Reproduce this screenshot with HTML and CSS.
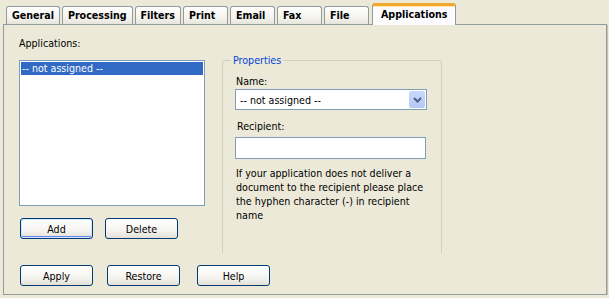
FILE: index.html
```html
<!DOCTYPE html>
<html lang="en">
<head>
    <meta charset="UTF-8">
    <title>Applications</title>
    <link rel="stylesheet" href="styles.css">
</head>
<body>
    <div class="window">
        <div class="tabs">
            <div class="tab">General</div>
            <div class="tab">Processing</div>
            <div class="tab">Filters</div>
            <div class="tab">Print</div>
            <div class="tab">Email</div>
            <div class="tab">Fax</div>
            <div class="tab">File</div>
            <div class="tab active">Applications</div>
        </div>

        <div class="panel">
            <div class="columns">
                <div class="left">
                    <div class="label">Applications:</div>
                    <div class="listbox">
                        <div class="item selected">-- not assigned --</div>
                    </div>
                    <div class="row-buttons">
                        <button class="btn default">Add</button>
                        <button class="btn">Delete</button>
                    </div>
                </div>

                <fieldset class="props">
                    <legend>Properties</legend>
                    <div class="label name-label">Name:</div>
                    <div class="select">
                        <span class="select-text">-- not assigned --</span>
                        <span class="select-arrow">
                            <svg width="9" height="6" viewBox="0 0 9 6">
                                <path d="M1 1 L4.5 4.5 L8 1" fill="none" stroke="#4D6185" stroke-width="2"/>
                            </svg>
                        </span>
                    </div>
                    <div class="label recipient-label">Recipient:</div>
                    <input type="text" class="textbox">
                    <p class="hint">If your application does not deliver a document to the recipient please place the hyphen character (-) in recipient name</p>
                </fieldset>
            </div>

            <div class="footer">
                <button class="btn">Apply</button>
                <button class="btn">Restore</button>
                <button class="btn help">Help</button>
            </div>
        </div>
    </div>
</body>
</html>
```

FILE: styles.css
```css
body {
    margin: 0;
    background-color: #ECE9D8;
    font-family: "DejaVu Sans Condensed", "DejaVu Sans", sans-serif;
    font-size: 10.6px;
    color: #000000;
}
.window {
    padding: 4px 0 0 3px;
    width: 604px;
}

/* tab strip */
.tabs {
    display: flex;
    align-items: flex-end;
    gap: 2px;
    padding-left: 3px;
    height: 20px;
    position: relative;
    z-index: 1;
}
.tab {
    box-sizing: border-box;
    height: 18px;
    min-width: 45px;
    padding: 0 5px;
    border: 1px solid #919B9C;
    border-bottom: none;
    border-radius: 3px 3px 0 0;
    background: linear-gradient(#FFFFFF, #F4F3EE 60%, #E6E5DD);
    font-weight: bold;
    line-height: 17px;
}
.tab.active {
    height: 22px;
    margin-bottom: -1px;
    margin-left: 1px;
    padding: 0 8px;
    border-top: 3px solid #FFC83C;
    box-shadow: inset 0 1px 0 #FFE6A0;
    background: #FCFCFE;
    line-height: 16px;
    border-radius: 3px 3px 0 0;
    border-top-color: #F0A830;
}

/* tab page */
.panel {
    box-sizing: border-box;
    height: 271px;
    border: 1px solid #919B9C;
    box-shadow: 1px 1px 0 #C6C3B3;
    background-color: #ECE9D8;
    padding: 11px 15px 8px 15px;
    display: flex;
    flex-direction: column;
}
.columns {
    display: flex;
    align-items: flex-start;
}
.left {
    width: 186px;
}
.label {
    line-height: 14px;
    height: 14px;
}
.listbox {
    box-sizing: border-box;
    margin-top: 10px;
    height: 146px;
    border: 1px solid #7F9DB9;
    background: #FFFFFF;
    padding: 1px;
}
.listbox .item {
    height: 13px;
    line-height: 13px;
    padding-left: 1px;
}
.listbox .item.selected {
    background-color: #316AC5;
    color: #FFFFFF;
}
.row-buttons {
    display: flex;
    gap: 12px;
    margin-top: 12px;
    padding-left: 1px;
}

/* buttons */
.btn {
    box-sizing: border-box;
    width: 73px;
    height: 21px;
    border: 1px solid #003C74;
    border-radius: 3px;
    background: linear-gradient(#FFFFFF, #F5F4F0 60%, #E3E1D6);
    font-family: inherit;
    font-size: inherit;
    color: #000000;
    padding: 0;
    cursor: pointer;
}
.btn.default {
    box-shadow: inset 0 0 0 1px #CEE7FF, inset 0 -1px 0 1px #6982EE;
}
.btn:hover {
    background: linear-gradient(#FFFFFF, #ECEBE6);
}

/* properties group */
.props {
    box-sizing: border-box;
    margin: 17px 0 0 17px;
    width: 220px;
    height: 200px;
    padding: 0 14px 0 12px;
    border: 1px solid #D0D0BF;
    border-bottom: none;
    border-radius: 4px 4px 0 0;
    min-width: 0;
}
.props legend {
    color: #0046D5;
    line-height: 14px;
    padding: 0 2px;
    margin-left: -4px;
}
.name-label {
    margin-top: 7px;
    padding-left: 1px;
}
.select {
    box-sizing: border-box;
    margin-top: 1px;
    width: 192px;
    height: 21px;
    border: 1px solid #7F9DB9;
    background: #FFFFFF;
    display: flex;
    align-items: center;
    justify-content: space-between;
    padding: 0 1px 0 4px;
}
.select-arrow {
    width: 16px;
    height: 17px;
    border-radius: 2px;
    background: linear-gradient(#C9D9FC, #B4C8F6);
    display: flex;
    align-items: center;
    justify-content: center;
}
.recipient-label {
    margin-top: 9px;
    padding-left: 2px;
}
.textbox {
    box-sizing: border-box;
    display: block;
    margin-top: 4px;
    width: 191px;
    height: 22px;
    border: 1px solid #7F9DB9;
    background: #FFFFFF;
}
.hint {
    margin: 7px 0 0 0;
    line-height: 14px;
    padding-left: 1px;
    width: 190px;
}

/* bottom buttons */
.footer {
    margin-top: auto;
    display: flex;
    gap: 14px;
    padding-left: 1px;
}
.footer .help {
    margin-left: 3px;
}
```
